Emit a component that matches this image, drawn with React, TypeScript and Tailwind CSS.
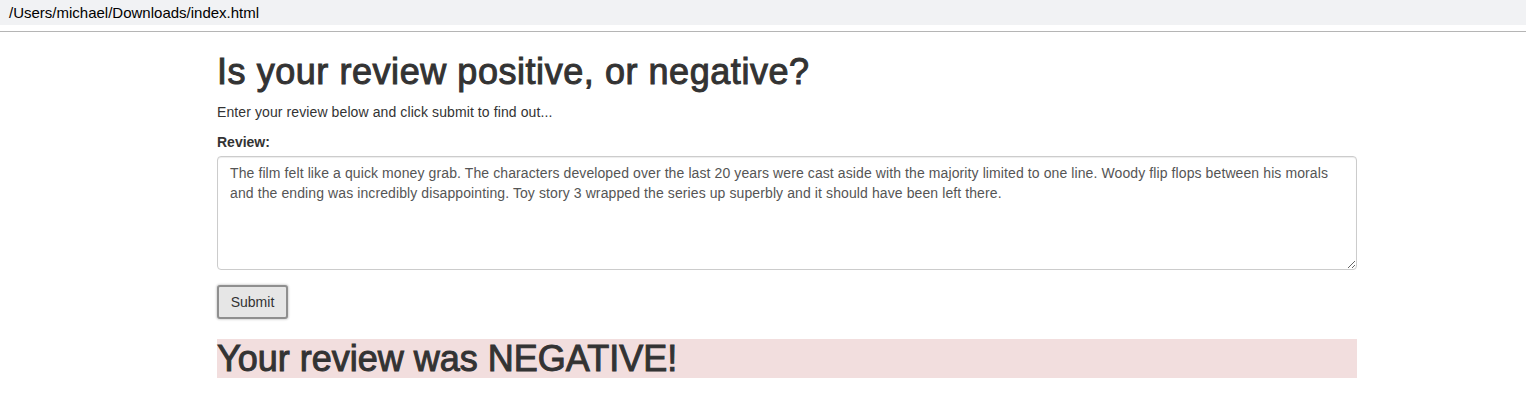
export default function App() {
  return (
    <div className="min-h-screen bg-white font-['Liberation_Sans',Arial,sans-serif] text-[#333]">
      <div className="h-[25px] bg-[#f1f2f4] pl-[9px] text-[15px] leading-[25px] text-black">
        /Users/michael/Downloads/index.html
      </div>
      <div className="mt-[6px] h-px bg-[#b5b5b5]" />
      <div className="ml-[217px] w-[1140px] text-[14px] leading-[20px]">
        <h1 className="mt-[20px] mb-[10px] text-[36px] leading-[1.1] tracking-[0.55px] [-webkit-text-stroke:1px_#333]">
          Is your review positive, or negative?
        </h1>
        <p className="mb-[10px] tracking-[0.1px]">
          Enter your review below and click submit to find out...
        </p>
        <label className="mb-[4px] block font-bold">Review:</label>
        <textarea
          rows={5}
          className="mb-[15px] block w-full rounded-[4px] border border-[#ccc] px-[12px] py-[6px] text-[14px] leading-[20px] tracking-[0.1px] text-[#555] shadow-[inset_0_1px_1px_rgba(0,0,0,0.075)] outline-none"
          defaultValue="The film felt like a quick money grab. The characters developed over the last 20 years were cast aside with the majority limited to one line. Woody flip flops between his morals and the ending was incredibly disappointing. Toy story 3 wrapped the series up superbly and it should have been left there."
        />
        <button className="h-[34px] w-[71px] rounded-[3px] border-2 border-[#8f8f8f] bg-[#e6e6e6] text-[14px] text-[#333] shadow-[0_0_2px_1px_rgba(0,0,0,0.15)]">
          Submit
        </button>
        <h1 className="mt-[20px] bg-[#f2dede] text-[36px] leading-[1.1] [-webkit-text-stroke:1px_#333]">
          Your review was NEGATIVE!
        </h1>
      </div>
    </div>
  );
}
